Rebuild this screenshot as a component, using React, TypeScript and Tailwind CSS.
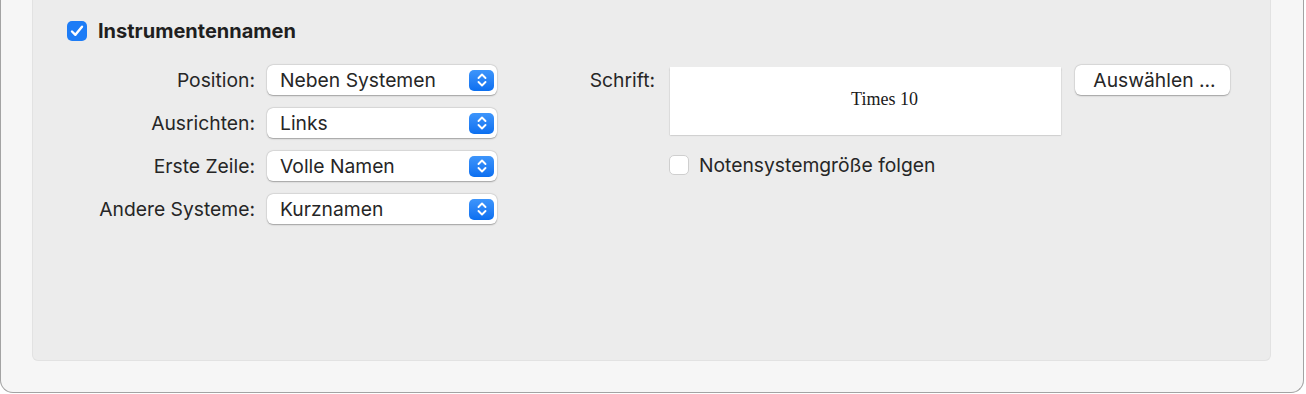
import React from "react";

const font = { fontFamily: "Inter, 'Liberation Sans', sans-serif" };

function Stepper() {
  return (
    <div className="flex h-[21px] w-[25px] items-center justify-center rounded-[5px] bg-gradient-to-b from-[#3d95fb] to-[#0a6ff0]">
      <svg width="14" height="18" viewBox="0 0 14 18" fill="none">
        <path d="M3.5 7 L7 3.5 L10.5 7" stroke="white" strokeWidth="1.9" strokeLinecap="round" strokeLinejoin="round" />
        <path d="M3.5 11 L7 14.5 L10.5 11" stroke="white" strokeWidth="1.9" strokeLinecap="round" strokeLinejoin="round" />
      </svg>
    </div>
  );
}

function Popup({ value }: { value: string }) {
  return (
    <div className="flex h-[30px] w-[230px] items-center justify-between rounded-[6px] bg-white pl-[13px] pr-[3px] shadow-[0_0.5px_1.5px_rgba(0,0,0,0.3),0_0_0_0.5px_rgba(0,0,0,0.06)]">
      <span className="text-[19.3px] leading-[24px] text-[#262626]">{value}</span>
      <Stepper />
    </div>
  );
}

const rows = [
  ["Position:", "Neben Systemen"],
  ["Ausrichten:", "Links"],
  ["Erste Zeile:", "Volle Namen"],
  ["Andere Systeme:", "Kurznamen"],
];

export default function App() {
  return (
    <div className="h-[394px] w-[1306px] bg-white" style={font}>
      <div className="h-[393px] w-[1304px] rounded-b-[13px] border-x border-b border-[#a3a3a3] bg-[#f6f6f6] pl-[31px] pr-[32px] pb-[31px]">
        <div className="h-full rounded-b-[6px] border-x border-b border-[#e2e2e2] bg-[#ececec] pl-[34px] pt-[21px]">
          <div className="flex h-[20px] items-center gap-[11px]">
            <div className="flex h-[20px] w-[20px] items-center justify-center rounded-[5px] bg-[#1d7cf6]">
              <svg width="16" height="16" viewBox="0 0 16 16" fill="none">
                <path d="M3 8.5 L6.4 11.8 L13 3.8" stroke="white" strokeWidth="2.4" strokeLinecap="round" strokeLinejoin="round" />
              </svg>
            </div>
            <span className="text-[20px] font-bold leading-[20px] text-[#1f1f1f]">Instrumentennamen</span>
          </div>
          <div className="mt-[24px] flex">
            <div className="flex flex-col gap-[13px]">
              {rows.map(([l, v]) => (
                <div key={l} className="flex items-center gap-[12px]">
                  <span className="w-[188px] text-right text-[19.3px] leading-[24px] text-[#262626]">{l}</span>
                  <Popup value={v} />
                </div>
              ))}
            </div>
            <div className="flex flex-col">
              <div className="flex items-start">
                <span className="mt-[2px] w-[158px] text-right text-[19.3px] leading-[26px] text-[#262626]">Schrift:</span>
                <div className="ml-[15px] mt-[2px] flex h-[68px] w-[391px] items-center justify-center bg-white pb-[4px] pl-[38px] shadow-[0_0.5px_1.5px_rgba(0,0,0,0.3)]">
                  <span className="text-[18px] text-[#1a1a1a]" style={{ fontFamily: "'Liberation Serif', serif" }}>Times 10</span>
                </div>
                <button className="ml-[14px] flex h-[30px] w-[155px] items-center justify-center rounded-[6px] bg-white pl-[4px] text-[19.3px] leading-[24px] text-[#262626] shadow-[0_0.5px_1.5px_rgba(0,0,0,0.3),0_0_0_0.5px_rgba(0,0,0,0.06)]">
                  Auswählen ...
                </button>
              </div>
              <div className="ml-[172px] mt-[18px] flex items-center gap-[10px]">
                <div className="h-[20px] w-[20px] rounded-[5px] border border-[#cfcfcf] bg-white" />
                <span className="text-[19.3px] leading-[24px] text-[#262626]">Notensystemgröße folgen</span>
              </div>
            </div>
          </div>
        </div>
      </div>
    </div>
  );
}
